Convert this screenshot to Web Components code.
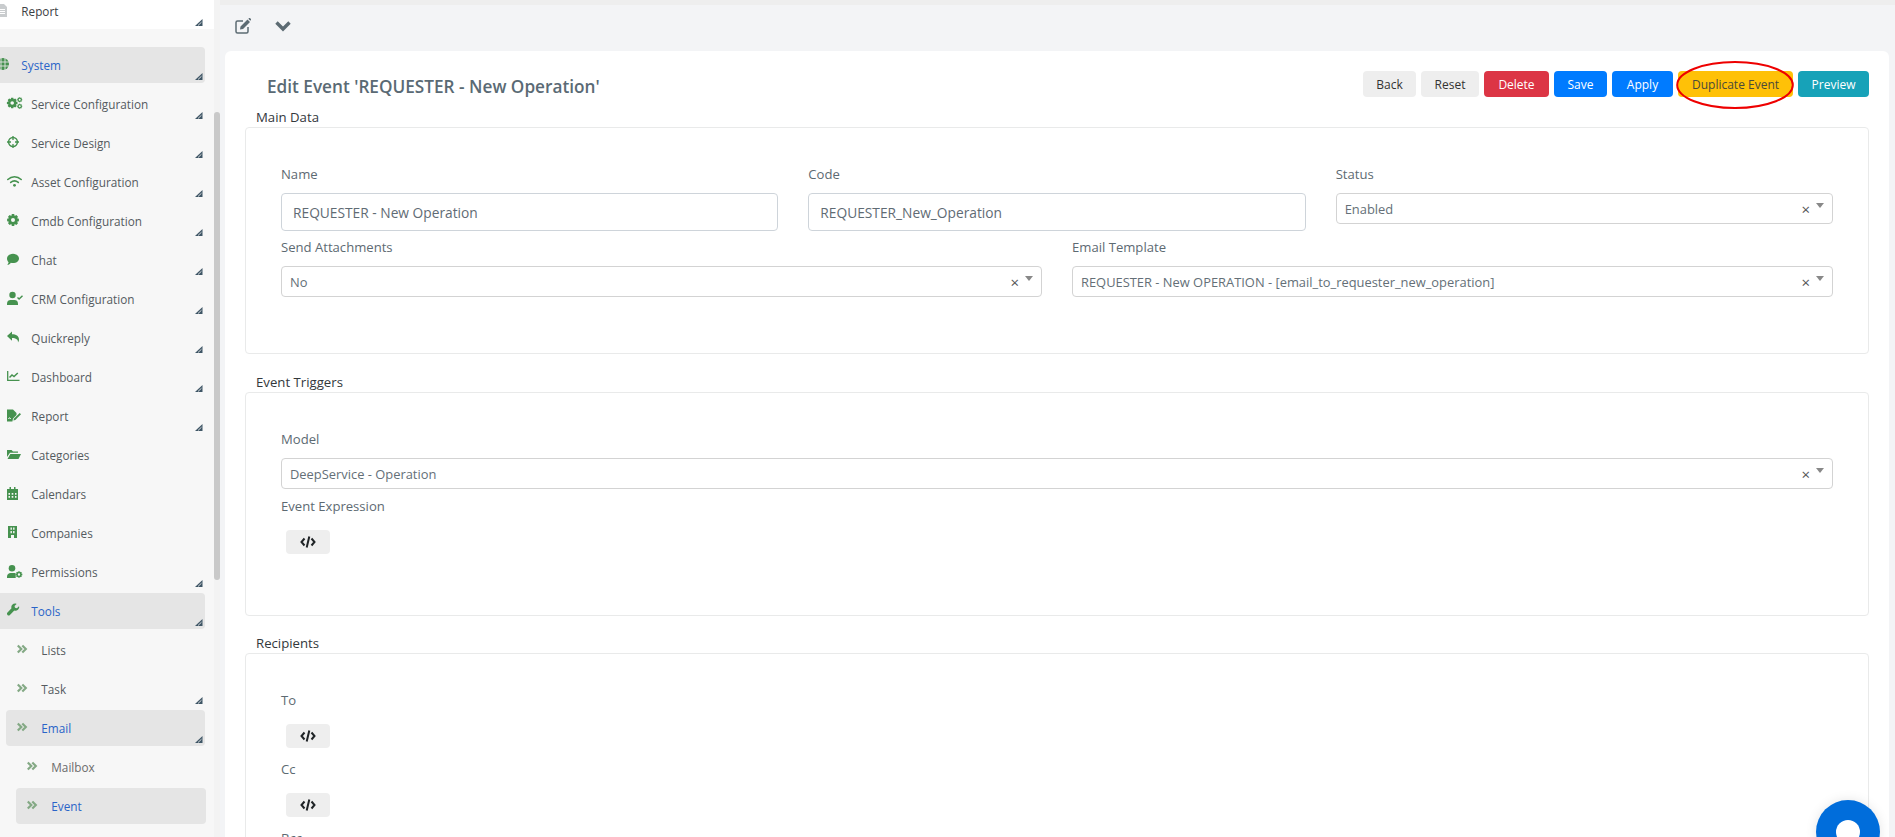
<!DOCTYPE html>
<html>
<head>
<meta charset="utf-8">
<title>Edit Event</title>
<style>
  html, body { margin: 0; height: 837px; overflow: hidden; background: #f3f4f6; }
  body { font-family: "Open Sans", "Noto Sans", sans-serif; }
  app-shell { height: 837px; }
</style>
</head>
<body>
<app-shell>
  <side-nav slot="nav">
    <nav-item slot="top" level="0" icon="file" arrow dark>Report</nav-item>
    <nav-item level="0" icon="globe" arrow active>System</nav-item>
    <nav-item level="1" icon="cogs" arrow>Service Configuration</nav-item>
    <nav-item level="1" icon="crosshair" arrow>Service Design</nav-item>
    <nav-item level="1" icon="wifi" arrow>Asset Configuration</nav-item>
    <nav-item level="1" icon="cog" arrow>Cmdb Configuration</nav-item>
    <nav-item level="1" icon="comment" arrow>Chat</nav-item>
    <nav-item level="1" icon="usercheck" arrow>CRM Configuration</nav-item>
    <nav-item level="1" icon="reply" arrow>Quickreply</nav-item>
    <nav-item level="1" icon="chart" arrow>Dashboard</nav-item>
    <nav-item level="1" icon="report" arrow>Report</nav-item>
    <nav-item level="1" icon="folder">Categories</nav-item>
    <nav-item level="1" icon="calendar">Calendars</nav-item>
    <nav-item level="1" icon="building">Companies</nav-item>
    <nav-item level="1" icon="usercog" arrow>Permissions</nav-item>
    <nav-item level="1" icon="wrench" arrow active>Tools</nav-item>
    <nav-item level="2" icon="chevrons">Lists</nav-item>
    <nav-item level="2" icon="chevrons" arrow>Task</nav-item>
    <nav-item level="2" icon="chevrons" arrow active>Email</nav-item>
    <nav-item level="3" icon="chevrons">Mailbox</nav-item>
    <nav-item level="3" icon="chevrons" active>Event</nav-item>
  </side-nav>

  <top-toolbar slot="toolbar"></top-toolbar>

  <edit-card slot="main" heading="Edit Event 'REQUESTER - New Operation'">
    <action-btn slot="actions" kind="light" w="53">Back</action-btn>
    <action-btn slot="actions" kind="light" w="58">Reset</action-btn>
    <action-btn slot="actions" kind="danger" w="65">Delete</action-btn>
    <action-btn slot="actions" kind="primary" w="53">Save</action-btn>
    <action-btn slot="actions" kind="primary" w="61">Apply</action-btn>
    <action-btn slot="actions" kind="warning" w="115" circled>Duplicate Event</action-btn>
    <action-btn slot="actions" kind="info" w="71">Preview</action-btn>

    <form-panel heading="Main Data" pad-bottom="49">
      <form-row cols="3">
        <text-field label="Name" value="REQUESTER - New Operation"></text-field>
        <text-field label="Code" value="REQUESTER_New_Operation"></text-field>
        <select-field label="Status" value="Enabled"></select-field>
      </form-row>
      <form-row cols="2">
        <select-field label="Send Attachments" value="No"></select-field>
        <select-field label="Email Template" value="REQUESTER - New OPERATION - [email_to_requester_new_operation]"></select-field>
      </form-row>
    </form-panel>

    <form-panel heading="Event Triggers" pad-bottom="61" style="margin-bottom: 18px">
      <select-field label="Model" value="DeepService - Operation"></select-field>
      <code-field label="Event Expression" near></code-field>
    </form-panel>

    <form-panel heading="Recipients" pad-bottom="40">
      <code-field label="To" first></code-field>
      <code-field label="Cc"></code-field>
      <code-field label="Bcc"></code-field>
    </form-panel>
  </edit-card>

  <chat-fab slot="fab"></chat-fab>
</app-shell>

<script>
// toothed wheel with a hole, as one path
function gear(cx, cy, R, hole) {
  const teeth = 8;
  const inner = R * 0.74;
  let d = "";
  for (let i = 0; i < teeth; i++) {
    const a = (i / teeth) * Math.PI * 2;
    const step = Math.PI / teeth;
    const pts = [[inner, a - step], [R, a - step * 0.5], [R, a + step * 0.5], [inner, a + step]];
    pts.forEach(([r, t], n) => {
      const x = (cx + r * Math.cos(t)).toFixed(2);
      const y = (cy + r * Math.sin(t)).toFixed(2);
      d += (i === 0 && n === 0 ? "M" : "L") + x + " " + y;
    });
  }
  d += `zM${cx - hole} ${cy}a${hole} ${hole} 0 1 0 ${hole * 2} 0a${hole} ${hole} 0 1 0 ${-hole * 2} 0z`;
  return `<path fill="currentColor" fill-rule="evenodd" d="${d}"/>`;
}

// icons for the side menu, drawn 1:1 in a 16x16 box, left aligned
const ICONS = {
  file: `<path fill="#c9ccce" d="M0 2h7l3 3v10H0z"/><path stroke="#fff" d="M2 7.500h6M2 9.500h6M2 11.500h6"/>`,
  globe: `<circle cx="6" cy="8" r="6" fill="currentColor"/><path fill="none" stroke="#e5e5e5" stroke-width=".9" d="M0 6h12M0 10h12M4 2v12M8 2v12"/>`,
  cogs: gear(5.200, 8, 5.400, 1.800) + gear(12.700, 4.700, 2.600, 1) + gear(12.700, 11.300, 2.600, 1),
  crosshair: `<circle cx="6" cy="8" r="4.400" fill="none" stroke="currentColor" stroke-width="1.500"/><path stroke="currentColor" stroke-width="1.300" d="M6 2v4M6 10v4M0 8h4M8 8h4"/>`,
  wifi: `<g fill="none" stroke="currentColor" stroke-width="1.600" stroke-linecap="round"><path d="M.8 6.500c4-3.700 9.400-3.700 13.400 0"/><path d="M3.700 9.400c2.300-1.900 5.300-1.900 7.600 0"/></g><circle cx="7.500" cy="12.300" r="1.400" fill="currentColor"/>`,
  cog: gear(6, 8, 6, 2),
  comment: `<path fill="currentColor" d="M6 2.700c3.300 0 6 2.100 6 4.700s-2.700 4.700-6 4.700c-.8 0-1.500-.1-2.200-.4C2.900 13.300 1.600 13.800.3 13.700c.7-.7 1.200-1.500 1.300-2.500C.600 10.300 0 8.900 0 7.400 0 4.800 2.700 2.700 6 2.700z"/>`,
  usercheck: `<circle cx="5.500" cy="5" r="3.200" fill="currentColor"/><path fill="currentColor" d="M0 15v-1.500c0-2.400 1.800-3.500 3.500-3.500h4c1.700 0 3.500 1.100 3.500 3.500V15z"/><path fill="none" stroke="currentColor" stroke-width="1.400" d="M10.500 7.500l1.600 1.600 3.400-3.400"/>`,
  reply: `<path fill="currentColor" d="M5 2.500v2.800c4 0 7 1.500 7 5.500 0 1-.5 2-1 2.700.3-3-2-4.500-6-4.500v2.800L0 7z"/>`,
  chart: `<path fill="none" stroke="currentColor" stroke-width="1.300" d="M.7 3v9.300h11.800"/><path fill="none" stroke="currentColor" stroke-width="1.500" d="M2.500 9.500L5 7l2 1.500L10.800 5"/>`,
  report: `<path fill="currentColor" d="M0 2.500h6l3.500 3.500v2L6 11.500l-.6 3H0z"/><path fill="none" stroke="#f7f7f7" stroke-width="1" d="M1.500 12c1-1.800 1.500-1.800 2 0"/><path fill="currentColor" d="M7 11.500L12.700 6l1.300 1.300-5.700 5.700-2 .6z"/>`,
  folder: `<path fill="currentColor" d="M0 4h4.500L6 5.500h5v1.300H3L0 11z"/><path fill="currentColor" d="M3.300 8H14l-2.500 5H.5z"/>`,
  calendar: `<path fill="currentColor" d="M0 4h2.500V2H4v2h3V2h1.500v2H11v11H0z"/><path fill="#f7f7f7" d="M1.500 8H3v1.700H1.500zM4.700 8h1.600v1.700H4.700zM8 8h1.500v1.700H8zM1.500 11H3v1.700H1.500zM4.700 11h1.600v1.700H4.700zM8 11h1.500v1.700H8z"/>`,
  building: `<path fill="currentColor" d="M1 2h9v12H7v-3H4v3H1z"/><path fill="#f7f7f7" d="M3.500 3.500h1.400v2.300H3.500zM6.100 3.500h1.400v2.300H6.100zM3.500 7h1.400v2.300H3.500zM6.100 7h1.400v2.300H6.100z"/>`,
  usercog: `<circle cx="5" cy="5.200" r="3.300" fill="currentColor"/><path fill="currentColor" d="M0 15v-1.500C0 11.200 1.800 10 3.500 10h3.500c.7 0 1.200.1 1.700.4V15z"/>` + gear(12, 11.500, 3.400, 1.200),
  wrench: `<path fill="currentColor" d="M12 4.200L9.900 6.300 8 5.800 7.500 4 9.600 1.900c-1.600-.6-3.300-.2-4.300.8-1 1-1.200 2.300-.8 3.600L.5 10.500c-.7.700-.7 1.700 0 2.400.7.700 1.700.700 2.400 0l4.400-4.300c1.300.4 2.600.1 3.600-.8 1-1 1.700-2.400 1.100-3.600z"/>`,
  chevrons: `<path fill="none" stroke="#84a985" stroke-width="2.200" d="M.8 4.500L4.300 8 .8 11.500M5.300 4.500L8.800 8 5.300 11.500"/>`
};

const navTemplate = document.createElement("template");
navTemplate.innerHTML = `
  <style>
    :host {
      display: flex;
      align-items: center;
      height: 36px;
      margin: 0 9px 3px calc(var(--level) * 10px);
      padding-left: 11px;
      border-radius: 4px;
      font-size: 11.75px;
      color: #555b5f;
      box-sizing: border-box;
      flex: none;
    }
    :host([active]) { background: #e5e5e5; color: #2a64c8; }
    :host([dark]) { color: #3c4043; }
    :host([level="3"]) { margin-right: 8px; }
    :host([level="3"]:not([active])) { color: #6b6b6b; }
    .icon { width: 24.3px; flex: none; display: flex; margin-top: -2px; color: #46924f; }
    .icon svg { width: 16px; height: 16px; overflow: visible; }
    .arrow { display: none; margin-left: auto; margin-right: 2px; margin-bottom: 3px; align-self: flex-end; width: 8px; height: 7px; }
    :host([arrow]) .arrow { display: block; }
  </style>
  <span class="icon"></span>
  <span><slot></slot></span>
  <svg class="arrow" viewBox="0 0 8 7"><path fill="#3f5666" d="M0 7L7.500 0v7z"/><path stroke="#e9eaea" stroke-width=".9" d="M3 6.500L6.500 3.200"/></svg>
`;
class NavItem extends HTMLElement {
  constructor() {
    super();
    this.attachShadow({mode: "open"});
    this.shadowRoot.appendChild(navTemplate.content.cloneNode(true));
    this.style.setProperty("--level", this.getAttribute("level"));
    this.shadowRoot.querySelector(".icon").innerHTML =
      `<svg viewBox="0 0 16 16">${ICONS[this.getAttribute("icon")]}</svg>`;
  }
}
customElements.define("nav-item", NavItem);

const sideTemplate = document.createElement("template");
sideTemplate.innerHTML = `
  <style>
    :host { display: flex; height: 100%; overflow: hidden; }
    .menu { width: 214px; overflow: hidden; background: #f7f7f7; }
    .top { background: #fff; height: 29px; margin-left: -14px; width: 228px; display: flex; flex-direction: column; justify-content: flex-end; }
    ::slotted([slot="top"]) { margin-bottom: 0; }
    .list { display: flex; flex-direction: column; margin-left: -14px; width: 228px; padding-top: 18px; }
    .bar { width: 6px; background: #f3f3f3; padding-top: 112px; box-sizing: border-box; }
    .thumb { height: 468px; background: #c9c9c9; border-radius: 3px; }
  </style>
  <div class="menu">
    <div class="top"><slot name="top"></slot></div>
    <div class="list"><slot></slot></div>
  </div>
  <div class="bar"><div class="thumb"></div></div>
`;
class SideNav extends HTMLElement {
  constructor() {
    super();
    this.attachShadow({mode: "open"});
    this.shadowRoot.appendChild(sideTemplate.content.cloneNode(true));
  }
}
customElements.define("side-nav", SideNav);

const toolbarTemplate = document.createElement("template");
toolbarTemplate.innerHTML = `
  <style>
    :host { display: block; flex: none; }
    .strip { height: 5px; background: #eeeeee; }
    .tools { height: 46px; display: flex; align-items: center; gap: 24px; padding-left: 15px; padding-bottom: 5px; color: #5c6b73; box-sizing: border-box; }
    svg { display: block; }
  </style>
  <div class="strip"></div>
  <div class="tools">
    <svg width="16" height="16" viewBox="0 0 16 16"><path fill="none" stroke="currentColor" stroke-width="1.500" d="M8 3H2.500C1.700 3 1 3.700 1 4.500v9c0 .8.700 1.500 1.500 1.500h9c.8 0 1.500-.7 1.500-1.500V9"/><path fill="currentColor" d="M5.500 8.500L12.500 1.500l2.500 2.500-7 7-3 .5zM13.300.8l.7-.6c.4-.3.900-.3 1.200 0l.7.7c.3.400.3.900 0 1.200l-.6.700z"/></svg>
    <svg width="16" height="12" viewBox="0 0 16 12"><path fill="none" stroke="currentColor" stroke-width="3.400" d="M1.500 2.500L8 9l6.500-6.500"/></svg>
  </div>
`;
class TopToolbar extends HTMLElement {
  constructor() {
    super();
    this.attachShadow({mode: "open"});
    this.shadowRoot.appendChild(toolbarTemplate.content.cloneNode(true));
  }
}
customElements.define("top-toolbar", TopToolbar);

const btnTemplate = document.createElement("template");
btnTemplate.innerHTML = `
  <style>
    :host { display: block; position: relative; flex: none; }
    button {
      display: block; width: 100%; height: 26px; padding: 0; border: 0; border-radius: 4px;
      font: inherit; font-size: 12px; cursor: pointer;
    }
    :host([kind="light"]) button { background: #eeeeee; color: #333; }
    :host([kind="danger"]) button { background: #dc3545; color: #fff; }
    :host([kind="primary"]) button { background: #007bff; color: #fff; }
    :host([kind="warning"]) button { background: #ffc107; color: #4a4a3a; }
    :host([kind="info"]) button { background: #17a2b8; color: #fff; }
    svg { display: none; position: absolute; left: -2px; top: -10px; width: 118px; height: 48px; pointer-events: none; }
    :host([circled]) svg { display: block; }
  </style>
  <button><slot></slot></button>
  <svg viewBox="0 0 118 48"><ellipse cx="59" cy="24" rx="57.800" ry="23" fill="none" stroke="#ee0000" stroke-width="2"/></svg>
`;
class ActionBtn extends HTMLElement {
  constructor() {
    super();
    this.attachShadow({mode: "open"});
    this.shadowRoot.appendChild(btnTemplate.content.cloneNode(true));
    this.style.width = this.getAttribute("w") + "px";
  }
}
customElements.define("action-btn", ActionBtn);

const cardTemplate = document.createElement("template");
cardTemplate.innerHTML = `
  <style>
    :host { display: block; margin: 0 6px 0 5px; padding: 20px 20px 0; background: #fff; border-radius: 6px 6px 0 0; flex: 1; min-height: 0; overflow: hidden; }
    .head { display: flex; justify-content: space-between; height: 37px; }
    h2 { margin: 4px 0 0 22px; font-size: 17.2px; line-height: 24px; font-weight: 600; color: #5a6a74; }
    .actions { display: flex; gap: 5px; align-items: flex-start; }
  </style>
  <div class="head">
    <h2></h2>
    <div class="actions"><slot name="actions"></slot></div>
  </div>
  <slot></slot>
`;
class EditCard extends HTMLElement {
  constructor() {
    super();
    this.attachShadow({mode: "open"});
    this.shadowRoot.appendChild(cardTemplate.content.cloneNode(true));
    this.shadowRoot.querySelector("h2").innerText = this.getAttribute("heading");
  }
}
customElements.define("edit-card", EditCard);

const panelTemplate = document.createElement("template");
panelTemplate.innerHTML = `
  <style>
    :host { display: block; margin-bottom: 19px; }
    h3 { margin: 0; padding-left: 11px; height: 19px; font-size: 13.2px; line-height: 19px; font-weight: 500; color: #33383c; }
    .box { padding: 37px 35px 0 35px; border: 1px solid #e9eaea; border-radius: 4px; }
  </style>
  <h3></h3>
  <div class="box"><slot></slot></div>
`;
class FormPanel extends HTMLElement {
  constructor() {
    super();
    this.attachShadow({mode: "open"});
    this.shadowRoot.appendChild(panelTemplate.content.cloneNode(true));
    this.shadowRoot.querySelector("h3").innerText = this.getAttribute("heading");
    this.shadowRoot.querySelector(".box").style.paddingBottom = this.getAttribute("pad-bottom") + "px";
  }
}
customElements.define("form-panel", FormPanel);

const rowTemplate = document.createElement("template");
rowTemplate.innerHTML = `
  <style>
    :host { display: grid; column-gap: 30px; align-items: start; margin-bottom: 7px; }
    :host([cols="3"]) { grid-template-columns: repeat(3, 1fr); }
    :host([cols="2"]) { grid-template-columns: repeat(2, 1fr); }
  </style>
  <slot></slot>
`;
class FormRow extends HTMLElement {
  constructor() {
    super();
    this.attachShadow({mode: "open"});
    this.shadowRoot.appendChild(rowTemplate.content.cloneNode(true));
  }
}
customElements.define("form-row", FormRow);

const fieldCss = `
  :host { display: block; min-width: 0; font-size: 12.9px; }
  label { display: block; height: 19px; line-height: 19px; margin-bottom: 9px; font-size: 13.1px; color: #5d6a72; }
`;

const textTemplate = document.createElement("template");
textTemplate.innerHTML = `
  <style>
    ${fieldCss}
    .input { height: 38px; line-height: 38px; padding: 0 11px; border: 1px solid #ced4da; border-radius: 4px; font-size: 13.75px; color: #5f6b74; box-sizing: border-box; }
  </style>
  <label></label>
  <div class="input"></div>
`;
class TextField extends HTMLElement {
  constructor() {
    super();
    this.attachShadow({mode: "open"});
    this.shadowRoot.appendChild(textTemplate.content.cloneNode(true));
    this.shadowRoot.querySelector("label").innerText = this.getAttribute("label");
    this.shadowRoot.querySelector(".input").innerText = this.getAttribute("value");
  }
}
customElements.define("text-field", TextField);

const selectTemplate = document.createElement("template");
selectTemplate.innerHTML = `
  <style>
    ${fieldCss}
    .select { display: flex; align-items: center; height: 31px; padding: 0 8px 0 8px; border: 1px solid #d3d3d3; border-radius: 4px; color: #646f77; box-sizing: border-box; }
    .value { flex: 1; min-width: 0; }
    .clear { color: #555; font-size: 15px; margin-top: 1px; margin-right: 6px; }
    .caret { width: 0; height: 0; border: 4px solid transparent; border-top: 5px solid #888; border-bottom: 0; margin-top: -6px; }
  </style>
  <label></label>
  <div class="select"><span class="value"></span><span class="clear">×</span><span class="caret"></span></div>
`;
class SelectField extends HTMLElement {
  constructor() {
    super();
    this.attachShadow({mode: "open"});
    this.shadowRoot.appendChild(selectTemplate.content.cloneNode(true));
    this.shadowRoot.querySelector("label").innerText = this.getAttribute("label");
    this.shadowRoot.querySelector(".value").innerText = this.getAttribute("value");
  }
}
customElements.define("select-field", SelectField);

const codeTemplate = document.createElement("template");
codeTemplate.innerHTML = `
  <style>
    ${fieldCss}
    :host { margin-top: 12px; }
    :host([near]) { margin-top: 8px; }
    :host([first]) { margin-top: 0; }
    label { margin-bottom: 14px; }
    .btn { display: flex; align-items: center; justify-content: center; width: 44px; height: 24px; margin-left: 5px; background: #eeeeee; border-radius: 4px; }
    svg { display: block; }
  </style>
  <label></label>
  <div class="btn">
    <svg width="16" height="12" viewBox="0 0 16 12"><path fill="none" stroke="#1f2326" stroke-width="2" d="M4.500 2.500L1.500 6l3 3.500M11.500 2.500l3 3.500-3 3.500M9.300.5L6.700 11.500"/></svg>
  </div>
`;
class CodeField extends HTMLElement {
  constructor() {
    super();
    this.attachShadow({mode: "open"});
    this.shadowRoot.appendChild(codeTemplate.content.cloneNode(true));
    this.shadowRoot.querySelector("label").innerText = this.getAttribute("label");
  }
}
customElements.define("code-field", CodeField);

const fabTemplate = document.createElement("template");
fabTemplate.innerHTML = `
  <style>
    :host { position: absolute; left: 1816px; top: 800px; width: 64px; height: 64px; border-radius: 50%; background: #006ddb; box-shadow: 0 0 12px rgba(0,0,0,.1); display: flex; justify-content: center; padding-top: 20px; box-sizing: border-box; }
    div { width: 24px; height: 24px; border-radius: 50%; background: #fff; }
  </style>
  <div></div>
`;
class ChatFab extends HTMLElement {
  constructor() {
    super();
    this.attachShadow({mode: "open"});
    this.shadowRoot.appendChild(fabTemplate.content.cloneNode(true));
  }
}
customElements.define("chat-fab", ChatFab);

const shellTemplate = document.createElement("template");
shellTemplate.innerHTML = `
  <style>
    :host { display: grid; grid-template-columns: 220px 1fr; height: 837px; overflow: hidden; }
    .content { display: flex; flex-direction: column; min-width: 0; height: 837px; overflow: hidden; }
  </style>
  <slot name="nav"></slot>
  <div class="content">
    <slot name="toolbar"></slot>
    <slot name="main"></slot>
  </div>
  <slot name="fab"></slot>
`;
class AppShell extends HTMLElement {
  constructor() {
    super();
    this.attachShadow({mode: "open"});
    this.shadowRoot.appendChild(shellTemplate.content.cloneNode(true));
  }
}
customElements.define("app-shell", AppShell);
</script>
</body>
</html>
